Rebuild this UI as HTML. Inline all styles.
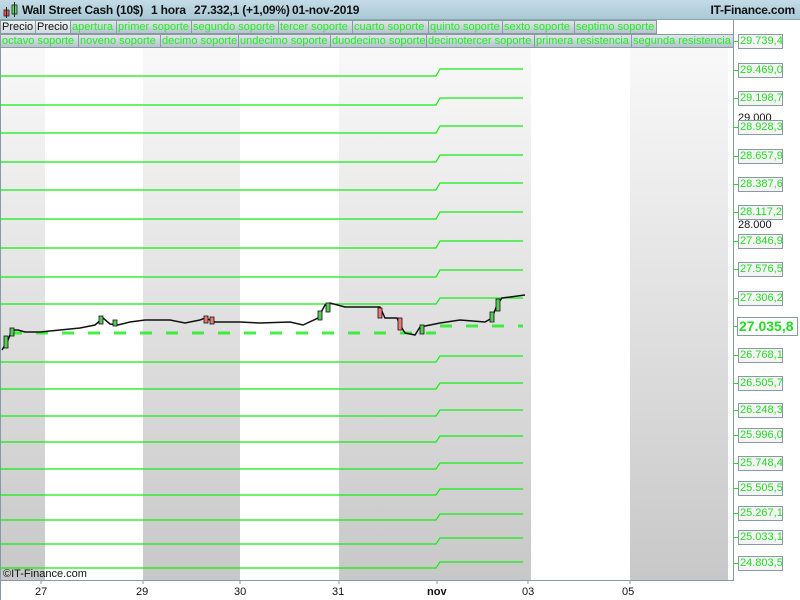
<!DOCTYPE html>
<html><head><meta charset="utf-8"><style>
*{margin:0;padding:0;box-sizing:border-box}
body{width:800px;height:600px;overflow:hidden;background:#fff;font-family:"Liberation Sans",sans-serif;position:relative}
.hdr{position:absolute;left:0;top:0;width:800px;height:20px;background:linear-gradient(#c4dce6,#a9c8d6);border-bottom:1px solid #8aa;}
.hdr span{position:absolute;top:3px;font-size:12px;font-weight:bold;color:#111;white-space:nowrap;letter-spacing:-0.2px}
.lg{position:absolute;height:14px;font-size:11px;line-height:13px;color:#22ee22;background:linear-gradient(#e0e6ea,#b4c4cc);border:1px solid #8a9aa4;padding-left:1px;white-space:nowrap;overflow:hidden}
.lg.k{color:#111;background:linear-gradient(#eef2f4,#d0dade)}
.pl{position:absolute;left:738px;width:45px;height:15px;border:1px solid #8a9aa4;background:#f4f4f4;color:#22dd22;font-size:11px;line-height:13px;padding-left:1px;white-space:nowrap;overflow:hidden}
.tk{position:absolute;left:733px;width:5px;height:1px;background:#22dd22}
.ax{position:absolute;top:586px;font-size:11px;color:#111}
</style></head><body>
<svg width="800" height="600" style="position:absolute;left:0;top:0">
<defs><linearGradient id="g" x1="0" y1="0" x2="0" y2="1"><stop offset="0" stop-color="#fafafa"/><stop offset="1" stop-color="#c8c8c8"/></linearGradient></defs>
<rect x="0" y="36" width="45" height="544" fill="url(#g)"/>
<rect x="143" y="36" width="97" height="544" fill="url(#g)"/>
<rect x="339" y="36" width="192" height="544" fill="url(#g)"/>
<rect x="630" y="36" width="98" height="544" fill="url(#g)"/>
<line x1="733.5" y1="20" x2="733.5" y2="580" stroke="#8a9aa4"/>
<line x1="0" y1="580.5" x2="734" y2="580.5" stroke="#8a9aa4"/>
<line x1="0.5" y1="36" x2="0.5" y2="600" stroke="#8a9aa4"/>
<g stroke="#8a9aa4"><line x1="41" y1="580" x2="41" y2="584"/><line x1="143" y1="580" x2="143" y2="584"/><line x1="240" y1="580" x2="240" y2="584"/><line x1="339" y1="580" x2="339" y2="584"/><line x1="437" y1="580" x2="437" y2="584"/><line x1="528" y1="580" x2="528" y2="584"/><line x1="630" y1="580" x2="630" y2="584"/></g>
<g fill="none" stroke="#11ee11" stroke-width="1.2">
<path d="M0 76H436L440 69H523"/>
<path d="M0 105H436L440 98H523"/>
<path d="M0 133H436L440 126H523"/>
<path d="M0 162H436L440 155H523"/>
<path d="M0 190H436L440 183H523"/>
<path d="M0 219H436L440 212H523"/>
<path d="M0 248H436L440 241H523"/>
<path d="M0 277H436L440 270H523"/>
<path d="M0 304H436L440 298H523"/>
<path d="M0 362H436L440 356H523"/>
<path d="M0 389H436L440 383H523"/>
<path d="M0 416H436L440 410H523"/>
<path d="M0 442H436L440 436H523"/>
<path d="M0 469H436L440 463H523"/>
<path d="M0 495H436L440 489H523"/>
<path d="M0 520H436L440 514H523"/>
<path d="M0 544H436L440 538H523"/>
<path d="M0 568H436L440 562H523"/>
</g>
<path d="M10 333H436M440 326H523" stroke="#22ee22" stroke-width="3" stroke-dasharray="12 14" fill="none" opacity="0.85"/>
<polyline fill="none" stroke="#111" stroke-width="1.5" points="2,350 8,340 12,330 18,330 25,332 40,332 60,330 80,328 95,325 103,318 110,324 118,325 130,322 145,320 170,320 185,323 200,320 205,318 215,322 240,322 260,323 290,322 303,325 318,318 325,305 330,303 345,307 380,307 385,318 397,318 400,325 405,333 415,335 420,327 430,325 440,323 460,320 485,322 492,318 497,305 502,298 510,297 525,295"/>
<g stroke="#111" stroke-width="0.8">
<rect x="4" y="336" width="4" height="12" fill="#55cc55"/><rect x="10" y="328" width="4" height="8" fill="#55cc55"/>
<rect x="99" y="316" width="4" height="8" fill="#55cc55"/><rect x="113" y="320" width="4" height="6" fill="#55cc55"/>
<rect x="204" y="316" width="4" height="7" fill="#ee7777"/><rect x="210" y="317" width="4" height="7" fill="#ee7777"/>
<rect x="318" y="311" width="4" height="9" fill="#55cc55"/><rect x="326" y="303" width="4" height="9" fill="#55cc55"/>
<rect x="378" y="308" width="4" height="10" fill="#ee7777"/><rect x="398" y="318" width="4" height="12" fill="#ee7777"/>
<rect x="420" y="325" width="4" height="9" fill="#55cc55"/><rect x="490" y="312" width="4" height="10" fill="#55cc55"/>
<rect x="496" y="299" width="4" height="12" fill="#55cc55"/>
</g>
</svg>
<div class="hdr"><svg style="position:absolute;left:3px;top:2px" width="16" height="16"><rect x="1" y="8" width="5" height="6" fill="#e55" stroke="#222" stroke-width="0.8"/><line x1="3.5" y1="5" x2="3.5" y2="16" stroke="#222"/><rect x="9" y="3" width="5" height="9" fill="#5d5" stroke="#222" stroke-width="0.8"/><line x1="11.5" y1="0" x2="11.5" y2="15" stroke="#222"/></svg>
<span style="left:22px">Wall Street Cash (10$)</span><span style="left:151px">1 hora</span><span style="left:194px">27.332,1 (+1,09%)</span><span style="left:292px">01-nov-2019</span><span style="right:5px">IT-Finance.com</span></div>
<div class="lg k" style="left:0;top:20px;width:36px">Precio</div>
<div class="lg k" style="left:35px;top:20px;width:36px">Precio</div>
<div class="lg" style="left:70px;top:20px;width:47px">apertura</div>
<div class="lg" style="left:116px;top:20px;width:76px">primer soporte</div>
<div class="lg" style="left:191px;top:20px;width:88px">segundo soporte</div>
<div class="lg" style="left:278px;top:20px;width:75px">tercer soporte</div>
<div class="lg" style="left:352px;top:20px;width:77px">cuarto soporte</div>
<div class="lg" style="left:428px;top:20px;width:75px">quinto soporte</div>
<div class="lg" style="left:502px;top:20px;width:73px">sexto soporte</div>
<div class="lg" style="left:574px;top:20px;width:83px">septimo soporte</div>
<div class="lg" style="left:0;top:34px;width:79px">octavo soporte</div>
<div class="lg" style="left:78px;top:34px;width:83px">noveno soporte</div>
<div class="lg" style="left:160px;top:34px;width:79px">decimo soporte</div>
<div class="lg" style="left:238px;top:34px;width:93px">undecimo soporte</div>
<div class="lg" style="left:330px;top:34px;width:97px">duodecimo soporte</div>
<div class="lg" style="left:426px;top:34px;width:109px">decimotercer soporte</div>
<div class="lg" style="left:534px;top:34px;width:98px">primera resistencia</div>
<div class="lg" style="left:631px;top:34px;width:103px">segunda resistencia</div>
<div style="position:absolute;left:738px;top:112px;font-size:11px;color:#111">29.000</div>
<div style="position:absolute;left:738px;top:219px;font-size:11px;color:#111">28.000</div>
<div class="tk" style="top:41px"></div><div class="pl" style="top:34px">29.739,4</div>
<div class="tk" style="top:70px"></div><div class="pl" style="top:63px">29.469,0</div>
<div class="tk" style="top:98px"></div><div class="pl" style="top:91px">29.198,7</div>
<div class="tk" style="top:127px"></div><div class="pl" style="top:120px">28.928,3</div>
<div class="tk" style="top:156px"></div><div class="pl" style="top:149px">28.657,9</div>
<div class="tk" style="top:184px"></div><div class="pl" style="top:177px">28.387,6</div>
<div class="tk" style="top:212px"></div><div class="pl" style="top:205px">28.117,2</div>
<div class="tk" style="top:241px"></div><div class="pl" style="top:234px">27.846,9</div>
<div class="tk" style="top:269px"></div><div class="pl" style="top:262px">27.576,5</div>
<div class="tk" style="top:298px"></div><div class="pl" style="top:291px">27.306,2</div>
<div class="tk" style="top:326px"></div><div class="pl" style="top:317px;left:737px;width:61px;height:19px;font-size:14px;line-height:17px;font-weight:bold;background:#fff">27.035,8</div>
<div class="tk" style="top:355px"></div><div class="pl" style="top:348px">26.768,1</div>
<div class="tk" style="top:383px"></div><div class="pl" style="top:376px">26.505,7</div>
<div class="tk" style="top:410px"></div><div class="pl" style="top:403px">26.248,3</div>
<div class="tk" style="top:435px"></div><div class="pl" style="top:428px">25.996,0</div>
<div class="tk" style="top:463px"></div><div class="pl" style="top:456px">25.748,4</div>
<div class="tk" style="top:488px"></div><div class="pl" style="top:481px">25.505,5</div>
<div class="tk" style="top:513px"></div><div class="pl" style="top:506px">25.267,1</div>
<div class="tk" style="top:537px"></div><div class="pl" style="top:530px">25.033,1</div>
<div class="tk" style="top:563px"></div><div class="pl" style="top:556px">24.803,5</div>
<div style="position:absolute;left:3px;top:568px;font-size:11px;color:#111">©IT-Finance.com</div>
<div class="ax" style="left:35px">27</div><div class="ax" style="left:136px">29</div><div class="ax" style="left:234px">30</div><div class="ax" style="left:332px">31</div><div class="ax" style="left:427px;font-weight:bold">nov</div><div class="ax" style="left:522px">03</div><div class="ax" style="left:622px">05</div>
</body></html>
